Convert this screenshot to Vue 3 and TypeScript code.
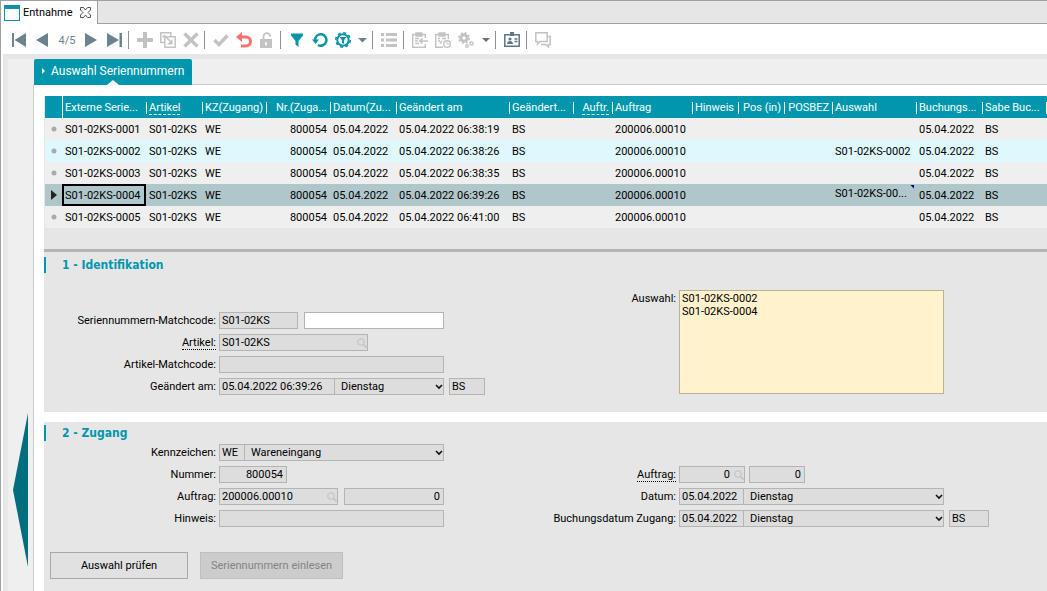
<script setup lang="ts">
import { ref } from 'vue'

interface Column {
  title: string
  width: number
  align?: 'right'
  link?: boolean
}

interface Item {
  id: string
  label: string
  value: string
  size: string
  kind?: 'select'
  right?: boolean
  search?: boolean
  editable?: boolean
}

interface Row {
  label: string
  link?: boolean
  joined?: boolean
  items: Item[]
}

const columns: Column[] = [
  { title: 'Externe Serie...', width: 84 },
  { title: 'Artikel', width: 56, link: true },
  { title: 'KZ(Zugang)', width: 64 },
  { title: 'Nr.(Zuga...', width: 64, align: 'right' },
  { title: 'Datum(Zu...', width: 66 },
  { title: 'Geändert am', width: 113 },
  { title: 'Geändert...', width: 64 },
  { title: 'Auftr.', width: 39, align: 'right', link: true },
  { title: 'Auftrag', width: 80 },
  { title: 'Hinweis', width: 46 },
  { title: 'Pos (in)', width: 46, align: 'right' },
  { title: 'POSBEZ', width: 48, align: 'right' },
  { title: 'Auswahl', width: 84 },
  { title: 'Buchungs...', width: 66 },
  { title: 'Sabe Buc...', width: 64 },
]

const selected = ref(3)

const entries = [
  { nr: 'S01-02KS-0001', time: '06:38:19', pick: '' },
  { nr: 'S01-02KS-0002', time: '06:38:26', pick: 'S01-02KS-0002' },
  { nr: 'S01-02KS-0003', time: '06:38:35', pick: '' },
  { nr: 'S01-02KS-0004', time: '06:39:26', pick: 'S01-02KS-00...' },
  { nr: 'S01-02KS-0005', time: '06:41:00', pick: '' },
]

const cells = entries.map((e) => [
  e.nr, 'S01-02KS', 'WE', '800054', '05.04.2022', '05.04.2022 ' + e.time, 'BS', '',
  '200006.00010', '', '', '', e.pick, '05.04.2022', 'BS',
])

const identRows: Row[] = [
  {
    label: 'Seriennummern-Matchcode:',
    items: [
      { id: 'mc', label: 'Matchcode', value: 'S01-02KS', size: 'w79' },
      { id: 'mc2', label: 'Matchcode Zusatz', value: '', size: 'w140', editable: true },
    ],
  },
  { label: 'Artikel:', link: true, items: [{ id: 'art', label: 'Artikel', value: 'S01-02KS', size: 'w149', search: true }] },
  { label: 'Artikel-Matchcode:', items: [{ id: 'amc', label: 'Artikel-Matchcode', value: '', size: 'w225' }] },
  {
    label: 'Geändert am:',
    joined: true,
    items: [
      { id: 'gea', label: 'Geändert am', value: '05.04.2022 06:39:26', size: 'w116' },
      { id: 'gead', label: 'Wochentag', value: 'Dienstag', size: 'w110', kind: 'select' },
      { id: 'geab', label: 'Geändert von', value: 'BS', size: 'w36' },
    ],
  },
]

const accessRows: Row[] = [
  {
    label: 'Kennzeichen:',
    joined: true,
    items: [
      { id: 'kz', label: 'Kennzeichen', value: 'WE', size: 'w26' },
      { id: 'kzt', label: 'Kennzeichen Text', value: 'Wareneingang', size: 'w200', kind: 'select' },
    ],
  },
  { label: 'Nummer:', items: [{ id: 'num', label: 'Nummer', value: '800054', size: 'w68', right: true }] },
  {
    label: 'Auftrag:',
    items: [
      { id: 'auf', label: 'Auftrag', value: '200006.00010', size: 'w119', search: true },
      { id: 'aufp', label: 'Auftragsposition', value: '0', size: 'w100', right: true },
    ],
  },
  { label: 'Hinweis:', items: [{ id: 'hin', label: 'Hinweis', value: '', size: 'w225' }] },
]

const bookingRows: Row[] = [
  {
    label: 'Auftrag:',
    link: true,
    items: [
      { id: 'auf2', label: 'Auftrag', value: '0', size: 'w66', right: true, search: true },
      { id: 'auf2p', label: 'Auftragsposition', value: '0', size: 'w56', right: true },
    ],
  },
  {
    label: 'Datum:',
    joined: true,
    items: [
      { id: 'dat', label: 'Datum', value: '05.04.2022', size: 'w65' },
      { id: 'datd', label: 'Wochentag', value: 'Dienstag', size: 'w201', kind: 'select' },
    ],
  },
  {
    label: 'Buchungsdatum Zugang:',
    joined: true,
    items: [
      { id: 'bu', label: 'Buchungsdatum Zugang', value: '05.04.2022', size: 'w65' },
      { id: 'bud', label: 'Wochentag', value: 'Dienstag', size: 'w201', kind: 'select' },
      { id: 'bub', label: 'Sachbearbeiter', value: 'BS', size: 'w40' },
    ],
  },
]

const groups = [
  { name: 'ident', rows: identRows },
  { name: 'access', rows: accessRows },
  { name: 'booking', rows: bookingRows },
]
const identGroups = groups.slice(0, 1)
const accessGroups = groups.slice(1)

const picks = ref('S01-02KS-0002\nS01-02KS-0004')
</script>

<template>
  <div class="window">
    <header class="titlebar">
      <div class="doc-tab">
        <svg width="16" height="16" viewBox="0 0 16 16"><rect x=".5" y=".5" width="15" height="15" fill="#fff" stroke="#0b93a8" /><path d="M0 0h16v4H0z" fill="#0b93a8" /></svg>
        <span>Entnahme</span>
        <button class="close" aria-label="Schließen">
          <svg width="11" height="11" viewBox="0 0 11 11"><path d="M.5.5h3l2 2.5 2-2.5h3v2.500L8 5.500l2.500 2.500v2.500h-3l-2-2.500-2 2.500h-3V8L3 5.500.5 3z" fill="#fff" stroke="#555" /></svg>
        </button>
      </div>
    </header>

    <nav class="toolbar" aria-label="Werkzeuge">
      <button aria-label="Erster"><svg viewBox="0 0 16 16" fill="#6c838d"><path d="M1 1h2v14H1zM15 1v14L3.500 8z" /></svg></button>
      <button aria-label="Zurück"><svg viewBox="0 0 16 16" fill="#6c838d"><path d="M14 1v14L2 8z" /></svg></button>
      <span class="pager">4/5</span>
      <button aria-label="Weiter"><svg viewBox="0 0 16 16" fill="#6c838d"><path d="M1 1v14l12-7z" /></svg></button>
      <button aria-label="Letzter"><svg viewBox="0 0 16 16" fill="#6c838d"><path d="M12.500 1H15v14h-2.500zM0 1v14l12-7z" /></svg></button>
      <i class="sep"></i>
      <button aria-label="Neu"><svg viewBox="0 0 16 16" fill="#c3c3c3"><path d="M6 0h4v6h6v4h-6v6H6v-6H0V6h6z" /></svg></button>
      <button aria-label="Kopieren"><svg viewBox="0 0 16 16" fill="none" stroke="#c3c3c3" stroke-width="1.500"><path d="M4 10.500H.8V.8h10V4" /><path d="M4.800 4.800h10.400v10.400H4.800z" /><path d="M2.500 5.500l2-2 6 6" /><path d="M12.500 7v5.500H7z" fill="#c3c3c3" stroke="none" /></svg></button>
      <button aria-label="Löschen"><svg viewBox="0 0 16 16" stroke="#c3c3c3" stroke-width="3.500"><path d="M1.500 1.500l13 13M14.500 1.500l-13 13" /></svg></button>
      <i class="sep"></i>
      <button aria-label="Bestätigen"><svg viewBox="0 0 16 16" fill="none" stroke="#c3c3c3" stroke-width="3.500"><path d="M1.500 8l4.500 4.500 8.500-9" /></svg></button>
      <button aria-label="Rückgängig"><svg viewBox="0 0 16 16" fill="none" stroke="#f9716d" stroke-width="3"><path d="M3 5h7a4.500 4.500 0 0 1 0 9H5" /><path d="M6 0v10L0 5z" fill="#f9716d" stroke="none" /></svg></button>
      <button aria-label="Sperren"><svg viewBox="0 0 16 16"><path d="M4.500 8V4.500a3.300 3.300 0 0 1 6.600 0" fill="none" stroke="#c3c3c3" stroke-width="1.800" /><path d="M1 7h12v9H1z" fill="#c3c3c3" /><path d="M6.200 10h1.600v3.500H6.200z" fill="#fff" /></svg></button>
      <i class="sep"></i>
      <button aria-label="Filter"><svg viewBox="0 0 16 16" fill="#0b93a8"><path d="M2 1.500h12v2L9.500 9v6L6.500 12.500V9L2 3.500z" /></svg></button>
      <button aria-label="Aktualisieren"><svg viewBox="0 0 16 16" fill="none" stroke="#0b93a8" stroke-width="2.500"><path d="M3 9.500V8a5.700 5.700 0 1 1 3 5" /><path d="M0 7.500h7L3.500 12z" fill="#0b93a8" stroke="none" /></svg></button>
      <button aria-label="Filter einstellen"><svg viewBox="0 0 16 16" fill="none" stroke="#0b93a8"><circle cx="8" cy="8" r="5.700" stroke-width="2" /><circle cx="8" cy="8" r="7.200" stroke-width="1.600" stroke-dasharray="3 2.650" /><path d="M4.500 5h7L9 8.200V12L7 11V8.200z" fill="#0b93a8" stroke="none" /></svg></button>
      <button class="drop" aria-label="Filtermenü"><svg viewBox="0 0 9 16" fill="#6c838d"><path d="M0 6h9l-4.500 4.500z" /></svg></button>
      <i class="sep"></i>
      <button class="single" aria-label="Liste"><svg viewBox="0 0 17 16" fill="#c3c3c3"><path d="M0 1h3v3H0zM5 1h11v3H5zM0 6.500h3v3H0zM5 6.500h11v3H5zM0 12h3v3H0zM5 12h11v3H5z" /></svg></button>
      <i class="sep"></i>
      <button aria-label="Einfügen"><svg viewBox="0 0 16 16" fill="none" stroke="#c3c3c3" stroke-width="1.400"><path d="M13.300 6V2.500H.7v12.800h12.600V12" /><path d="M4 1h6v3H4z" fill="#c3c3c3" /><path d="M3 6.500h4M3 9h3M3 11.500h4M16 9H9" /><path d="M10.500 5.500v7L6.500 9z" fill="#c3c3c3" stroke="none" /></svg></button>
      <button aria-label="Zeitplan"><svg viewBox="0 0 16 16" fill="none" stroke="#c3c3c3" stroke-width="1.400"><path d="M13.300 7V2.500H.7v12.800H8" /><path d="M4 1h6v3H4z" fill="#c3c3c3" /><path d="M3 6.500h2M7 6.500h4M3 9h2M7 8.500L5 12" /><circle cx="12" cy="12" r="3.300" fill="#fff" /><path d="M12 10v2.200h2" stroke-width="1" /></svg></button>
      <button aria-label="Einstellungen"><svg viewBox="0 0 16 16" fill="none" stroke="#c3c3c3"><circle cx="6" cy="6" r="3.200" stroke-width="3" /><circle cx="6" cy="6" r="5.200" stroke-width="1.600" stroke-dasharray="2 2.080" /><circle cx="13.500" cy="11.500" r="1.600" stroke-width="1.400" /><circle cx="9" cy="14" r="1.300" stroke-width="1.200" /></svg></button>
      <button class="drop" aria-label="Einstellungsmenü"><svg viewBox="0 0 9 16" fill="#6f6f6f"><path d="M1 6h8l-4 4z" /></svg></button>
      <i class="sep"></i>
      <button class="single" aria-label="Kontakt"><svg viewBox="0 0 17 16" fill="none" stroke="#5d7680" stroke-width="1.500"><path d="M.8 2.800h14.400v11.400H.8z" /><path d="M6 0h4v4H6z" fill="#5d7680" stroke="none" /><path d="M10.500 7h3M10.500 9.500h3" /><circle cx="6" cy="7" r="1.600" fill="#5d7680" stroke="none" /><path d="M3 12c0-4 6-4 6 0z" fill="#5d7680" stroke="none" /></svg></button>
      <i class="sep"></i>
      <button aria-label="Kommentare"><svg viewBox="0 0 16 16" fill="none" stroke="#c3c3c3" stroke-width="1.500"><path d="M.8.8h11.400v8.700H5L2.500 12V9.500H.8z" /><path d="M13 4.500h2.200v8h-1.700V15L11 12.500H6" /></svg></button>
    </nav>

    <div class="body">
      <aside class="side">
        <button class="handle" aria-label="Seitenleiste öffnen">
          <svg width="15" height="154" viewBox="0 0 15 154"><path d="M15 0v154L0 77z" fill="#006e7e" /></svg>
        </button>
      </aside>
      <div class="content">
        <div class="tabs">
          <button class="tab">
            <svg width="3" height="6" viewBox="0 0 3 6"><path d="M0 0v6l3-3z" fill="#fff" /></svg>
            <span>Auswahl Seriennummern</span>
          </button>
        </div>
        <main class="main">
          <div class="grid-area">
            <table>
              <colgroup>
                <col class="mark-col" />
                <col v-for="c in columns" :key="c.title" :style="{ width: c.width + 'px' }" />
                <col />
              </colgroup>
              <thead>
                <tr>
                  <th></th>
                  <th v-for="c in columns" :key="c.title" scope="col" :class="{ right: c.align }">
                    <span :class="{ link: c.link }">{{ c.title }}</span>
                  </th>
                  <th></th>
                </tr>
              </thead>
              <tbody>
                <tr v-for="(row, r) in cells" :key="r" :class="{ even: r === 1, selected: r === selected }" @click="selected = r">
                  <td class="mark">
                    <svg v-if="r === selected" width="6" height="10" viewBox="0 0 6 10"><path d="M0 0v10l6-5z" fill="#222" /></svg>
                    <svg v-else width="6" height="6" viewBox="0 0 6 6"><circle cx="3" cy="3" r="2.500" fill="#aaa" /></svg>
                  </td>
                  <td
                    v-for="(v, c) in row"
                    :key="c"
                    :class="{ right: columns[c].align, cursor: c === 0 && r === selected, note: c === 12 && r === selected }"
                  >{{ v }}</td>
                  <td></td>
                </tr>
              </tbody>
            </table>
          </div>

          <section class="panel first">
            <h2>1 - Identifikation</h2>
            <div class="cols">
              <div v-for="g in identGroups" :key="g.name" :class="['group', g.name]">
                <div v-for="row in g.rows" :key="row.label" class="row">
                  <label :for="row.items[0].id"><span :class="{ link: row.link }">{{ row.label }}</span></label>
                  <div :class="['fields', { joined: row.joined }]">
                    <div v-for="it in row.items" :key="it.id" :class="['field', it.size]">
                      <template v-if="it.kind === 'select'">
                        <select :id="it.id" :aria-label="it.label"><option>{{ it.value }}</option></select>
                        <svg class="chev" width="8" height="6" viewBox="0 0 8 6"><path d="M1 1l3 3 3-3" fill="none" stroke="#111" stroke-width="1.600" /></svg>
                      </template>
                      <template v-else>
                        <input :id="it.id" type="text" :aria-label="it.label" :value="it.value" :readonly="!it.editable" :class="{ right: it.right, editable: it.editable }" />
                        <svg v-if="it.search" class="lens" width="10" height="10" viewBox="0 0 10 10"><g fill="none" stroke="#c0c0c0"><circle cx="4" cy="4" r="3.300" /><path d="M6.500 6.500L9.500 9.500" stroke-width="1.500" /></g></svg>
                      </template>
                    </div>
                  </div>
                </div>
              </div>
              <div class="group">
                <div class="row top">
                  <label for="picks">Auswahl:</label>
                  <textarea id="picks" v-model="picks"></textarea>
                </div>
              </div>
            </div>
          </section>

          <section class="panel second">
            <h2>2 - Zugang</h2>
            <div class="cols">
              <div v-for="g in accessGroups" :key="g.name" :class="['group', g.name]">
                <div v-for="row in g.rows" :key="row.label" class="row">
                  <label :for="row.items[0].id"><span :class="{ link: row.link }">{{ row.label }}</span></label>
                  <div :class="['fields', { joined: row.joined }]">
                    <div v-for="it in row.items" :key="it.id" :class="['field', it.size]">
                      <template v-if="it.kind === 'select'">
                        <select :id="it.id" :aria-label="it.label"><option>{{ it.value }}</option></select>
                        <svg class="chev" width="8" height="6" viewBox="0 0 8 6"><path d="M1 1l3 3 3-3" fill="none" stroke="#111" stroke-width="1.600" /></svg>
                      </template>
                      <template v-else>
                        <input :id="it.id" type="text" :aria-label="it.label" :value="it.value" readonly :class="{ right: it.right, searchable: it.search }" />
                        <svg v-if="it.search" class="lens" width="10" height="10" viewBox="0 0 10 10"><g fill="none" stroke="#c0c0c0"><circle cx="4" cy="4" r="3.300" /><path d="M6.500 6.500L9.500 9.500" stroke-width="1.500" /></g></svg>
                      </template>
                    </div>
                  </div>
                </div>
              </div>
            </div>
            <div class="actions">
              <button class="btn">Auswahl prüfen</button>
              <button class="btn wide" disabled>Seriennummern einlesen</button>
            </div>
          </section>
        </main>
      </div>
    </div>
  </div>
</template>

<style>
body {
  margin: 0;
  overflow: hidden;
}
</style>

<style scoped>
* {
  box-sizing: border-box;
}
.window {
  min-height: 100vh;
  display: flex;
  flex-direction: column;
  background: #fff;
  border-left: 1px solid #a0a0a0;
  border-top: 1px solid #a0a0a0;
  font-family: Roboto, "Liberation Sans", sans-serif;
  font-size: 11px;
  line-height: 13px;
  color: #000;
}
button, input, select, textarea {
  font: inherit;
  color: inherit;
}
button {
  padding: 0;
  border: 0;
  background: none;
}
svg {
  display: block;
  flex: none;
}
.titlebar {
  height: 23px;
  display: flex;
  background: #e6e6e6;
  border-bottom: 1px solid #a0a0a0;
}
.doc-tab {
  height: 23px;
  width: 97px;
  display: flex;
  align-items: center;
  padding-left: 3px;
  gap: 3px;
  background: #fff;
  border-right: 1px solid #a0a0a0;
}
.close {
  margin-left: auto;
  margin-right: 6px;
}
.toolbar {
  height: 30px;
  display: flex;
  align-items: center;
  padding: 2px 0 0 10px;
  gap: 7px;
}
.toolbar button {
  width: 16px;
  height: 16px;
  flex: none;
}
.toolbar svg {
  width: 100%;
  height: 16px;
}
.toolbar .drop {
  width: 9px;
}
.toolbar .single {
  width: 17px;
}
.pager {
  width: 20px;
  text-align: center;
  color: #6c838d;
}
.sep {
  width: 1px;
  height: 18px;
  margin: 0 1px 0 -2px;
  background: #8f8f8f;
}
.body {
  flex: 1;
  display: flex;
  margin-left: 2px;
  border-left: 5px solid #e6e6e6;
  border-top: 5px solid #e6e6e6;
  background: #efefef;
}
.side {
  width: 25px;
  flex: none;
  display: flex;
  flex-direction: column;
  align-items: flex-end;
  justify-content: flex-end;
  padding: 0 5px 24px 0;
}
.content {
  flex: 1;
  min-width: 0;
  display: flex;
  flex-direction: column;
}
.tabs {
  display: flex;
  padding-left: 1px;
}
.tab {
  position: relative;
  height: 26px;
  width: 158px;
  margin-bottom: -1px;
  display: flex;
  align-items: center;
  gap: 6px;
  padding: 0 0 2px 8px;
  border-radius: 2px 2px 0 0;
  background: #0097ae;
  color: #fff;
  font-size: 12px;
  white-space: nowrap;
  z-index: 1;
}
.tab::after {
  content: "";
  position: absolute;
  left: 50%;
  bottom: 0;
  margin-left: -6px;
  border: 6px solid transparent;
  border-top: 0;
  border-bottom: 5px solid #fff;
}
.main {
  flex: 1;
  display: flex;
  flex-direction: column;
  padding: 11px 0 0 10px;
  border-left: 1px solid #ccc;
  border-top: 1px solid #ccc;
  background: #fff;
  overflow: hidden;
}
.grid-area {
  padding: 0 0 21px 1px;
  background: #e6e6e6;
  border-bottom: 3px solid #b4b4b4;
  overflow: hidden;
}
table {
  width: 100%;
  table-layout: fixed;
  border-collapse: separate;
  border-spacing: 0;
}
.mark-col {
  width: 17px;
}
th, td {
  height: 22px;
  padding: 0 3px;
  text-align: left;
  font-weight: normal;
  white-space: nowrap;
}
th {
  color: #fff;
  background: linear-gradient(#fff, #fff) 0 60% / 1px 12px no-repeat #0097ae;
}
th:first-child {
  background: #0097ae;
}
th:nth-child(2) {
  background: linear-gradient(#fff, #fff) 0 0 / 1px 22px no-repeat #0097ae;
}
th .link {
  border-bottom: 1px dashed #fff;
}
td {
  background: #efefef;
}
.even td {
  background: #dff8fd;
}
.selected td {
  background: #afc6ca;
}
.right {
  text-align: right;
}
.mark svg {
  margin: 0 auto;
}
.selected .cursor {
  box-shadow: inset 0 0 0 2px #000;
}
.selected .note {
  padding-bottom: 4px;
  background: linear-gradient(225deg, #00007d 2px, transparent 3px) 78px 1px / 4px 4px no-repeat #afc6ca;
}
.panel {
  background: #e6e6e6;
}
.first {
  padding: 5px 0 17px;
  margin-bottom: 10px;
}
.second {
  flex: 1;
  padding: 3px 0 12px;
}
h2 {
  margin: 0;
  padding-left: 16px;
  border-left: 2px solid #0097ae;
  color: #0097ae;
  font: bold 12px/16px "DejaVu Sans Condensed", "Noto Sans", sans-serif;
}
.cols {
  display: grid;
  grid-template-columns: 460px 1fr;
  margin-top: 3px;
}
.first .cols {
  margin-top: 17px;
}
.group {
  display: flex;
  flex-direction: column;
  gap: 5px;
}
.ident, .booking {
  padding-top: 22px;
}
.row {
  display: grid;
  grid-template-columns: 172px 1fr;
  column-gap: 3px;
  align-items: center;
  white-space: nowrap;
}
.row.top {
  align-items: start;
}
.row.top label {
  padding-top: 2px;
}
label {
  text-align: right;
}
label .link {
  border-bottom: 1px dotted #000;
}
.fields {
  display: flex;
  gap: 6px;
}
.joined {
  gap: 0;
}
.joined .field:nth-child(2) {
  margin-left: -1px;
}
.joined .field:nth-child(3) {
  margin-left: 5px;
}
.booking .fields {
  gap: 4px;
}
.booking .joined {
  gap: 0;
}
.field {
  position: relative;
  height: 17px;
  flex: none;
}
.w26 { width: 26px; }
.w36 { width: 36px; }
.w40 { width: 40px; }
.w56 { width: 56px; }
.w65 { width: 65px; }
.w66 { width: 66px; }
.w68 { width: 68px; }
.w79 { width: 79px; }
.w100 { width: 100px; }
.w110 { width: 110px; }
.w116 { width: 116px; }
.w119 { width: 119px; }
.w140 { width: 140px; }
.w149 { width: 149px; }
.w200 { width: 200px; }
.w201 { width: 201px; }
.w225 { width: 225px; }
input, select {
  display: block;
  width: 100%;
  height: 17px;
  padding: 0 3px 0 2px;
  border: 1px solid #b4b4b4;
  border-radius: 0;
  outline: 0;
  background: #ddd;
}
.searchable.right {
  padding-right: 14px;
}
select {
  appearance: none;
  padding-left: 6px;
}
.editable {
  background: #fff;
}
.chev {
  position: absolute;
  right: 1px;
  top: 6px;
}
.lens {
  position: absolute;
  right: 1px;
  top: 4px;
}
textarea {
  display: block;
  width: 265px;
  height: 104px;
  padding: 1px 2px;
  border: 1px solid #bcb193;
  outline: 0;
  resize: none;
  background: #fff2cc;
}
.actions {
  display: flex;
  gap: 12px;
  margin-top: 25px;
  padding-left: 6px;
}
.btn {
  width: 138px;
  height: 27px;
  border: 1px solid #a8a8a8;
  background: #e1e1e1;
}
.wide {
  width: 143px;
}
.btn:disabled {
  border-color: #bfbfbf;
  background: #ccc;
  color: #838383;
}
</style>
